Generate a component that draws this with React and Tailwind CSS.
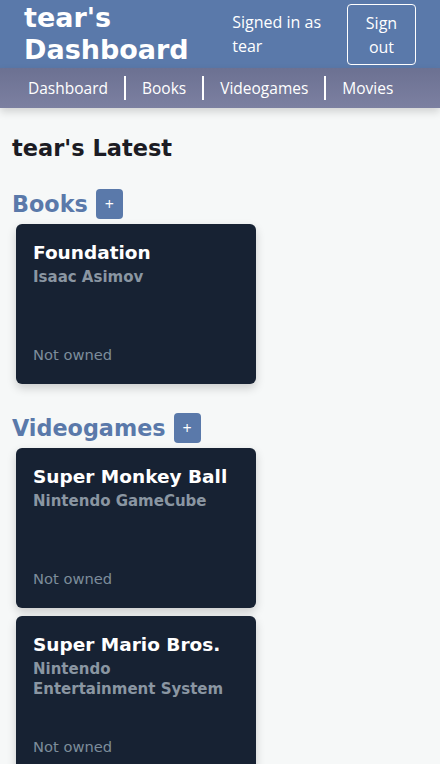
function Card({ title, sub }) {
  return (
    <div className="ml-4 mb-2 w-[240px] h-[160px] rounded-[6px] bg-[#172233] shadow-[0_4px_10px_rgba(0,0,0,0.18)] pl-[17px] pr-[26px] pt-[16px] pb-[19px] flex flex-col justify-between font-['DejaVu_Sans',sans-serif]">
      <div>
        <div className="text-white font-bold text-[18.5px] leading-[26px]">{title}</div>
        <div className="text-[#8a96a2] font-bold text-[15px] leading-[20px] mt-[1px]">{sub}</div>
      </div>
      <div className="text-[#7d8d9b] text-[14.7px] leading-[20px]">Not owned</div>
    </div>
  );
}

function Heading({ children, cls }) {
  return (
    <div className={`flex items-center pl-3 ${cls}`}>
      <span className="text-[#5a79aa] font-bold text-[22.3px] leading-[30px] font-['DejaVu_Sans',sans-serif]">{children}</span>
      <button className="ml-2 w-[27px] h-[30px] rounded-[4px] bg-[#5a79aa] text-white text-[16px] leading-none flex items-center justify-center font-['Open_Sans',sans-serif]">+</button>
    </div>
  );
}

export default function App() {
  return (
    <div className="min-h-[764px] bg-[#f6f8f8]">
      <header className="bg-[#5a79aa] h-[68px] flex items-start px-6">
        <div className="text-white font-bold text-[27px] leading-[32px] pt-[2px] font-['DejaVu_Sans',sans-serif]">
          tear's<br />Dashboard
        </div>
        <div className="ml-auto flex items-start pt-[4px] font-['Open_Sans',sans-serif]">
          <div className="text-white text-[16px] leading-[24px] mt-[6px] mr-[26px]">Signed in as<br />tear</div>
          <button className="w-[69px] h-[61px] border border-white rounded-[4px] text-white text-[16px] leading-[24px]">Sign<br />out</button>
        </div>
      </header>
      <nav className="relative h-[40px] bg-gradient-to-b from-[#6c7192] to-[#7c80a1] flex items-center px-3 shadow-[0_4px_8px_rgba(0,0,0,0.15)] font-['Open_Sans',sans-serif]">
        <span className="text-white text-[15.5px] leading-[24px] px-4">Dashboard</span>
        <span className="text-white text-[15.5px] leading-[24px] px-4 border-l-2 border-white">Books</span>
        <span className="text-white text-[15.5px] leading-[24px] px-4 border-l-2 border-white">Videogames</span>
        <span className="text-white text-[15.5px] leading-[24px] px-4 border-l-2 border-white">Movies</span>
      </nav>
      <main className="pt-6">
        <div className="pl-3 text-[#1c1c24] font-bold text-[22.5px] leading-[32px] font-['DejaVu_Sans',sans-serif]">tear's Latest</div>
        <Heading cls="mt-[25px] mb-[5px]">Books</Heading>
        <Card title="Foundation" sub="Isaac Asimov" />
        <Heading cls="mt-[29px] mb-[5px]">Videogames</Heading>
        <Card title="Super Monkey Ball" sub="Nintendo GameCube" />
        <Card title="Super Mario Bros." sub="Nintendo Entertainment System" />
      </main>
    </div>
  );
}
